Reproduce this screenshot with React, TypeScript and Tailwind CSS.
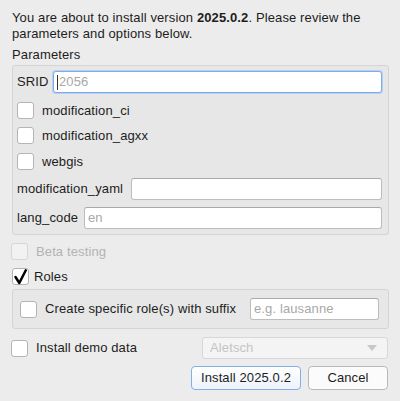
import React from "react";

const Box = ({ checked = false, disabled = false }: { checked?: boolean; disabled?: boolean }) => (
  <div
    className={
      "w-[17px] h-[17px] rounded-[3px] border shrink-0 relative " +
      (disabled ? "border-[#d6d6d6] bg-[#f2f2f2]" : "border-[#b4b4b4] bg-white")
    }
  >
    {checked && (
      <svg width="17" height="17" viewBox="0 0 17 17" className="absolute -left-px -top-px overflow-visible">
        <path d="M3.5 9 L7.3 15 L13.8 2.3" fill="none" stroke="#000" strokeWidth="2.5" strokeLinecap="round" strokeLinejoin="round" />
      </svg>
    )}
  </div>
);

const Input = ({ placeholder = "", focus = false, className = "" }: { placeholder?: string; focus?: boolean; className?: string }) => (
  <div
    className={
      "h-[22px] bg-white rounded-[3px] flex items-center pl-[3px] text-[13px] text-[#a8a8a8] relative " +
      (focus ? "border border-[#7eacea] shadow-[0_0_0_1px_#b6d0f3]" : "border border-[#bdbdbd] border-t-[#a9a9a9]") +
      " " +
      className
    }
  >
    {focus && <span className="w-px h-[15px] bg-[#333] mr-[1px]" />}
    {placeholder}
  </div>
);

export default function App() {
  return (
    <div
      className="w-[400px] h-[401px] bg-[#ececec] pt-[10px] pl-[12px] pr-[11px] text-[13px] text-[#1d1d1d] leading-4 tracking-[0.12px]"
      style={{ fontFamily: '"Liberation Sans", Arial, sans-serif' }}
    >
      <p>
        You are about to install version <b>2025.0.2</b>. Please review the parameters and options below.
      </p>
      <div className="mt-[5px]">Parameters</div>
      <div className="mt-[2px] h-[170px] border border-[#d4d4d4] bg-[#e7e7e7] rounded-[3px] pl-[4px] pr-[6px] pt-[5px] flex flex-col">
        <div className="flex items-center h-[22px]">
          <span className="w-[36px]">SRID</span>
          <Input placeholder="2056" focus className="flex-1" />
        </div>
        <div className="flex items-center mt-[9px] h-[17px]">
          <Box />
          <span className="ml-[8px]">modification_ci</span>
        </div>
        <div className="flex items-center mt-[8px] h-[17px]">
          <Box />
          <span className="ml-[8px]">modification_agxx</span>
        </div>
        <div className="flex items-center mt-[9px] h-[17px]">
          <Box />
          <span className="ml-[8px]">webgis</span>
        </div>
        <div className="flex items-center mt-[8px] h-[22px]">
          <span className="w-[114px]">modification_yaml</span>
          <Input className="flex-1" />
        </div>
        <div className="flex items-center mt-[7px] h-[22px]">
          <span className="w-[67px]">lang_code</span>
          <Input placeholder="en" className="flex-1" />
        </div>
      </div>
      <div className="flex items-center mt-[8px] h-[17px] -ml-[1px]">
        <Box disabled />
        <span className="ml-[8px] text-[#b3b3b3]">Beta testing</span>
      </div>
      <div className="flex items-center mt-[8px] h-[17px]">
        <Box checked />
        <span className="ml-[5px]">Roles</span>
      </div>
      <div className="mt-[4px] h-[40px] border border-[#d4d4d4] bg-[#e7e7e7] rounded-[3px] pl-[7px] pr-[9px] flex items-center">
        <Box />
        <span className="ml-[8px]">Create specific role(s) with suffix</span>
        <Input placeholder="e.g. lausanne" className="ml-auto w-[129px]" />
      </div>
      <div className="flex items-center mt-[8px] h-[22px] -ml-[1px]">
        <Box />
        <span className="ml-[8px]">Install demo data</span>
        <div className="ml-auto mr-[1px] w-[186px] h-[22px] rounded-[3px] border border-[#d8d8d8] bg-[#f4f4f4] flex items-center pl-[7px] pr-[10px] text-[#c4c4c4]">
          <span>Aletsch</span>
          <svg width="10" height="6" viewBox="0 0 10 6" className="ml-auto">
            <path d="M0 0 H10 L5 6 Z" fill="#c8c8c8" />
          </svg>
        </div>
      </div>
      <div className="flex justify-end mt-[7px] gap-[7px] pr-[1px]">
        <button className="w-[110px] h-[24px] rounded-[4px] border border-[#84afe6] bg-gradient-to-b from-white to-[#eef3fa] text-[13px] text-[#1d1d1d]">
          Install 2025.0.2
        </button>
        <button className="w-[80px] h-[24px] rounded-[4px] border border-[#b8b8b8] bg-[#fbfbfb] text-[13px] text-[#1d1d1d]">
          Cancel
        </button>
      </div>
    </div>
  );
}
